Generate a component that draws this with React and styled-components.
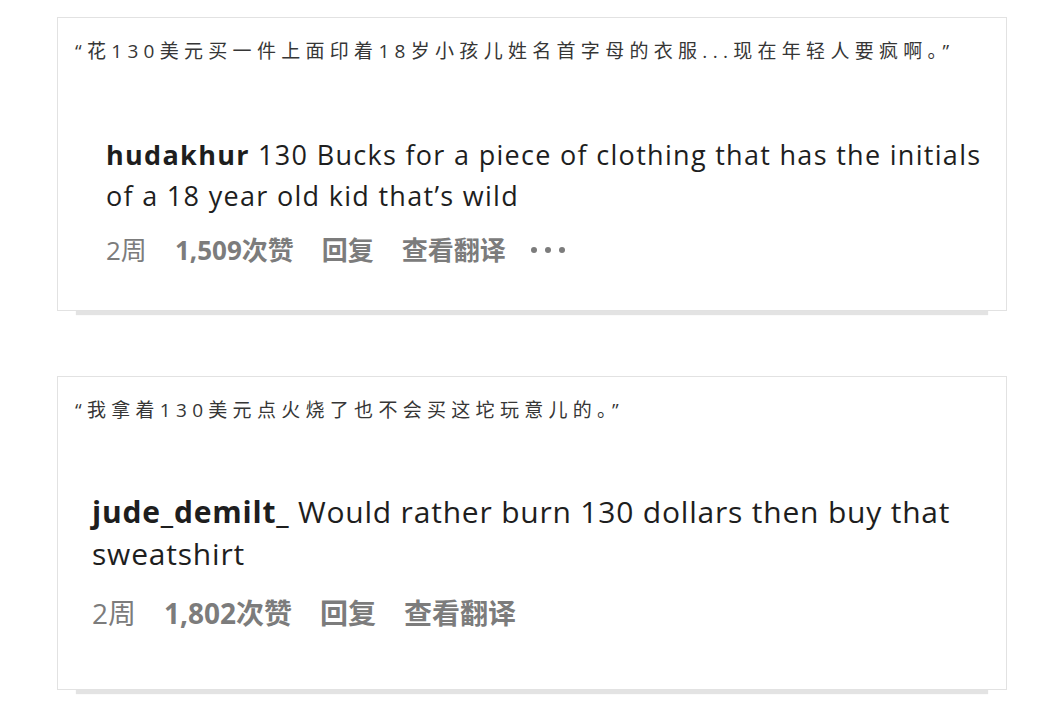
import React from 'react';
import styled, { createGlobalStyle } from 'styled-components';

const GlobalStyle = createGlobalStyle`
  html, body {
    margin: 0;
    padding: 0;
    background: #ffffff;
  }
  body {
    font-family: "Open Sans", "Noto Sans CJK SC", sans-serif;
  }
`;

const comments = [
  {
    quote: '“花130美元买一件上面印着18岁小孩儿姓名首字母的衣服...现在年轻人要疯啊。”',
    user: 'hudakhur',
    text: '130 Bucks for a piece of clothing that has the initials of a 18 year old kid that’s wild',
    likes: '1,509',
    more: true,
    big: false,
  },
  {
    quote: '“我拿着130美元点火烧了也不会买这坨玩意儿的。”',
    user: 'jude_demilt_',
    text: 'Would rather burn 130 dollars then buy that sweatshirt',
    likes: '1,802',
    more: false,
    big: true,
  },
];

export default function App() {
  return (
    <Page>
      <GlobalStyle />
      {comments.map((c, i) => (
        <Card key={i} $big={c.big}>
          <Quote>{c.quote}</Quote>
          <Body $big={c.big}>
            <Comment $big={c.big}>
              <User>{c.user}</User> {c.text}
            </Comment>
            <Meta $big={c.big}>
              <Age>2周</Age>
              <MetaItem>{c.likes}次赞</MetaItem>
              <MetaItem>回复</MetaItem>
              <MetaItem>查看翻译</MetaItem>
              {c.more && (
                <Dots>
                  <Dot />
                  <Dot />
                  <Dot />
                </Dots>
              )}
            </Meta>
          </Body>
        </Card>
      ))}
    </Page>
  );
}

const Page = styled.div`
  display: flex;
  flex-direction: column;
  gap: 65px;
  padding: 17px 0 24px 57px;
`;

const Card = styled.div`
  box-sizing: border-box;
  width: 950px;
  height: ${(p) => (p.$big ? '314px' : '294px')};
  border: 1px solid #e2e2e2;
  background: #fff;
  padding: 20px 0 0 17px;
  box-shadow: 0 23px 1px -19px #e3e3e3;
`;

const Quote = styled.div`
  font-family: "Open Sans", "Noto Sans CJK SC", sans-serif;
  font-size: 19px;
  letter-spacing: 5.3px;
  line-height: 26px;
  color: #363636;
`;

const Body = styled.div`
  padding-left: ${(p) => (p.$big ? '17px' : '31px')};
  margin-top: ${(p) => (p.$big ? '68px' : '70px')};
`;

const Comment = styled.div`
  font-family: "Open Sans", "Noto Sans CJK SC", sans-serif;
  font-size: ${(p) => (p.$big ? '30px' : '27px')};
  line-height: ${(p) => (p.$big ? '42px' : '41px')};
  letter-spacing: ${(p) => (p.$big ? '0.8px' : '1.3px')};
  color: #1e1e1e;
  width: 880px;
`;

const User = styled.span`
  font-weight: 700;
`;

const Meta = styled.div`
  display: flex;
  align-items: center;
  gap: ${(p) => (p.$big ? '28px' : '28px')};
  margin-top: ${(p) => (p.$big ? '20px' : '16px')};
  font-family: "Open Sans", "Noto Sans CJK SC", sans-serif;
  font-size: ${(p) => (p.$big ? '28px' : '26px')};
  color: #7c7c7c;
  line-height: 36px;
`;

const Age = styled.span`
  font-weight: 400;
`;

const MetaItem = styled.span`
  font-weight: 700;
`;

const Dots = styled.span`
  display: flex;
  gap: 8px;
  margin-left: -3px;
`;

const Dot = styled.span`
  width: 6px;
  height: 6px;
  border-radius: 50%;
  background: #7c7c7c;
`;
